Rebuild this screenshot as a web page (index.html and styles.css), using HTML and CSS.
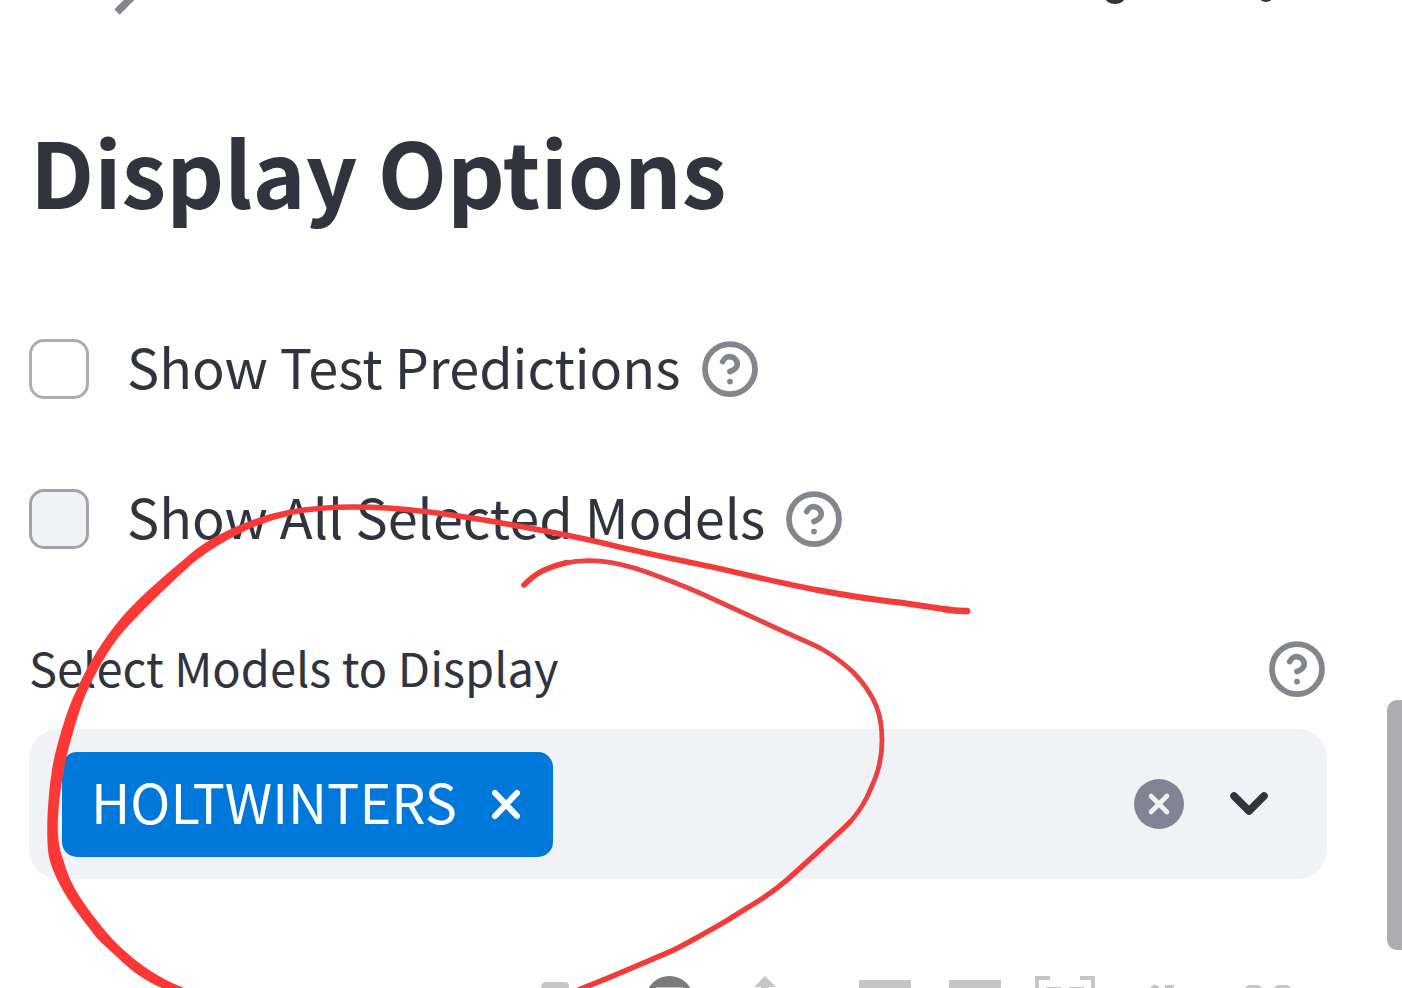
FILE: index.html
```html
<!DOCTYPE html>
<html lang="en">
<head>
<meta charset="utf-8">
<meta name="viewport" content="width=device-width, initial-scale=1">
<title>Display Options</title>
<link rel="stylesheet" href="styles.css">
</head>
<body>
<svg class="defs" aria-hidden="true">
  <symbol id="help" viewBox="0 0 24 24">
    <g fill="none" stroke="currentColor" stroke-width="2.3" stroke-linecap="round" stroke-linejoin="round">
      <circle cx="12" cy="12" r="10"/>
      <path d="M9.1 9a3 3 0 0 1 5.8 1c0 2-2.9 3-2.9 3"/>
      <path d="M12 17h.01"/>
    </g>
  </symbol>
</svg>
<div class="page">
  <header class="top">
    <svg class="top-line" width="60" height="20" viewBox="0 0 60 20" aria-hidden="true"><path d="M16 12 36-8" stroke="#83878d" stroke-width="7.5"/></svg>
    <svg class="top-dots" width="180" height="20" viewBox="0 0 180 20" aria-hidden="true"><g fill="#31333f"><ellipse cx="9" cy="-3" rx="10" ry="7"/><ellipse cx="160" cy="-4" rx="7" ry="6"/></g></svg>
  </header>
  <main class="options">
    <h1 class="title">Display Options</h1>
    <div class="check-row">
      <input class="check" type="checkbox" id="test">
      <label class="check-label" for="test">Show Test Predictions</label>
      <button class="help" type="button" aria-label="Help"><svg class="help-icon"><use href="#help"/></svg></button>
    </div>
    <div class="check-row">
      <input class="check check-hover" type="checkbox" id="all">
      <label class="check-label" for="all">Show All Selected Models</label>
      <button class="help" type="button" aria-label="Help"><svg class="help-icon"><use href="#help"/></svg></button>
    </div>
    <div class="field-head">
      <label class="field-label" for="models">Select Models to Display</label>
      <button class="help" type="button" aria-label="Help"><svg class="help-icon"><use href="#help"/></svg></button>
    </div>
    <div class="multi">
      <span class="tag"><span class="tag-text">HOLTWINTERS</span>
        <button class="icon-button" type="button" aria-label="Remove HOLTWINTERS"><svg width="32" height="32" viewBox="0 0 32 32"><path d="m5 5 22 23M27 5 5 28" stroke="#fff" stroke-width="6" stroke-linecap="round"/></svg></button>
      </span>
      <input class="multi-input" id="models" type="text" role="combobox" aria-expanded="false">
      <button class="icon-button" type="button" aria-label="Clear all"><svg width="50" height="50" viewBox="0 0 50 50"><circle cx="25" cy="25" r="25" fill="#808495"/><path d="m17 17 16 16M33 17 17 33" stroke="#f0f2f6" stroke-width="4.6" stroke-linecap="round"/></svg></button>
      <button class="icon-button" type="button" aria-label="Open"><svg width="40" height="50" viewBox="0 0 40 50"><path d="m5 17 15 15 15-15" fill="none" stroke="#31333f" stroke-width="7.6" stroke-linecap="round" stroke-linejoin="round"/></svg></button>
    </div>
  </main>
  <svg class="modebar" width="780" height="60" viewBox="530 970 780 60" aria-hidden="true">
    <g fill="#c6c6c6">
      <path d="M541 990v-3q1-5 5-5h19q4 0 4 5v3h10v36h-48v-36z"/>
      <path d="m765 976 11 11h-7v38h-8v-38h-7z"/>
      <path d="M859 980h52v50h-52zM949 980h52v50h-52z"/>
      <path d="M1035 976h15v4h-11v11h-4zM1080 976h15v15h-4v-11h-11zM1046 987h15v4h-15zM1069 987h15v4h-15z"/>
      <path d="m1134 1004 17-17q4-5 8 0l6 6v-8h9v17l8 8z"/>
      <rect x="1245" y="985" width="17" height="30" rx="5"/><rect x="1274" y="985" width="17" height="30" rx="5"/>
    </g>
    <circle cx="669.500" cy="1000" r="24" fill="#7b7b7b"/><path d="M656 987h27v6h-27z" fill="#c6c6c6"/>
  </svg>
</div>
<div class="scroll-thumb"></div>
<svg class="ink" width="1402" height="988" viewBox="0 0 1402 988" aria-hidden="true">
  <path fill="#fb3836" d="M162 988C145 981 130 970 117 957S101 944 93 933C79 915 66 898 57 879C53 870 49 861 48 850C46 830 48 795 52 770C54 756 58 743 62 729C66 715 71 701 78 687C88 665 103 639 122 617C143 593 168 573 188 556C208 538 234 527 250 521Q270 513 290 509.500V515.500Q270 520 251 528C232 537 213 547 193 563C174 580 152 601 131 623C112 642 98 668 89 687C82 702 78 715 74 729C70 743 66 756 64 770C59 795 57 820 58 835Q59 848 61 853C64 862 66 870 70 879C80 900 93 916 107 933C120 948 150 977 190 990H166Z"/>
  <g fill="none" stroke-linecap="round" stroke-linejoin="round" stroke="#f33b3a">
    <path stroke-width="5.600" d="M289 512.500C311 508.500 331 507 353 507C403 507 448 514 493 521.500C535 529 576 536 617 546.500C650 554 683 561 717 568C751 576 784 584 817 590"/>
    <path stroke-width="6" d="M817 590C845 595 873 600 900 602.500Q924 606 947 609.500"/>
    <path stroke-width="6.600" d="M945 609.300Q956 611.300 967 611"/>
    <path stroke-width="5.600" d="M524 585C536 573 545 568 567 562.500"/>
    <path stroke-width="4.800" stroke="#e94241" d="M563 563.500C596 556 627 564 660 577C684 586 694 590 713 599L787 633C798 638 810 643 820 648Q838 658 853 672C876 696 882 715 882 740C882 765 875 780 867 797Q860 811 850 822"/>
    <path stroke-width="5.300" d="M850 822C840 832 830 841 820 850L787 880C774 891 761 900 747 908Q727 921 707 932C694 939 681 947 667 953L627 970Q604 980 578 990"/>
  </g>
</svg>
</body>
</html>
```
FILE: styles.css
```css
* { box-sizing: border-box; }
html, body { height: 100%; overflow: hidden; }
body {
  margin: 0;
  background: #fefefe;
  color: #31333f;
  font-family: "Noto Sans CJK SC", "Noto Sans", sans-serif;
}
button { margin: 0; padding: 0; border: 0; background: none; color: inherit; cursor: pointer; }
svg { display: block; }
.defs { position: absolute; width: 0; height: 0; }
.page { padding: 0 75px 0 29px; }
.top { display: flex; justify-content: space-between; padding: 0 41px 0 72px; }
.title { margin: 80px 0 0; padding-left: 1px; font-size: 90px; line-height: 140px; font-weight: 700; }
.options { display: flex; flex-direction: column; }
.check-row { display: flex; align-items: center; height: 60px; margin-top: 90px; }
.title + .check-row { margin-top: 99px; }
.check {
  appearance: none;
  flex: none;
  width: 60px;
  height: 60px;
  margin: 0 38px 0 0;
  border: 3px solid #adadb0;
  border-radius: 15px;
  background: #fff;
}
.check-hover { background: #f0f2f6; border-color: #a3a4aa; }
.check-label, .tag-text { padding-bottom: 6px; font-size: 54px; line-height: 54px; }
.help { flex: none; color: #83878d; }
.check-row .help { margin-left: 19px; }
.help-icon { width: 60px; height: 60px; }
.field-head { display: flex; align-items: center; justify-content: space-between; margin-top: 90px; height: 60px; }
.field-label { padding-bottom: 4px; font-size: 47px; line-height: 56px; }
.multi {
  display: flex;
  align-items: center;
  height: 150px;
  margin-top: 30px;
  padding: 0 58px 0 33px;
  border-radius: 30px;
  background: #f0f2f6;
}
.tag {
  display: flex;
  align-items: center;
  gap: 33px;
  height: 105px;
  padding: 0 31px 0 29px;
  border-radius: 15px;
  background: #0078d9;
  color: #fff;
}
.multi-input { flex: 1; min-width: 0; height: 60px; border: 0; background: transparent; font: inherit; font-size: 54px; outline: 0; }
.multi > .icon-button + .icon-button { margin-left: 45px; }
.modebar { margin: 91px 0 0 501px; }
.scroll-thumb {
  position: fixed;
  top: 700px;
  right: 0;
  width: 15px;
  height: 250px;
  border-radius: 10px 0 0 10px;
  background: #aeadb2;
}
.ink { position: absolute; top: 0; left: 0; pointer-events: none; }
```
